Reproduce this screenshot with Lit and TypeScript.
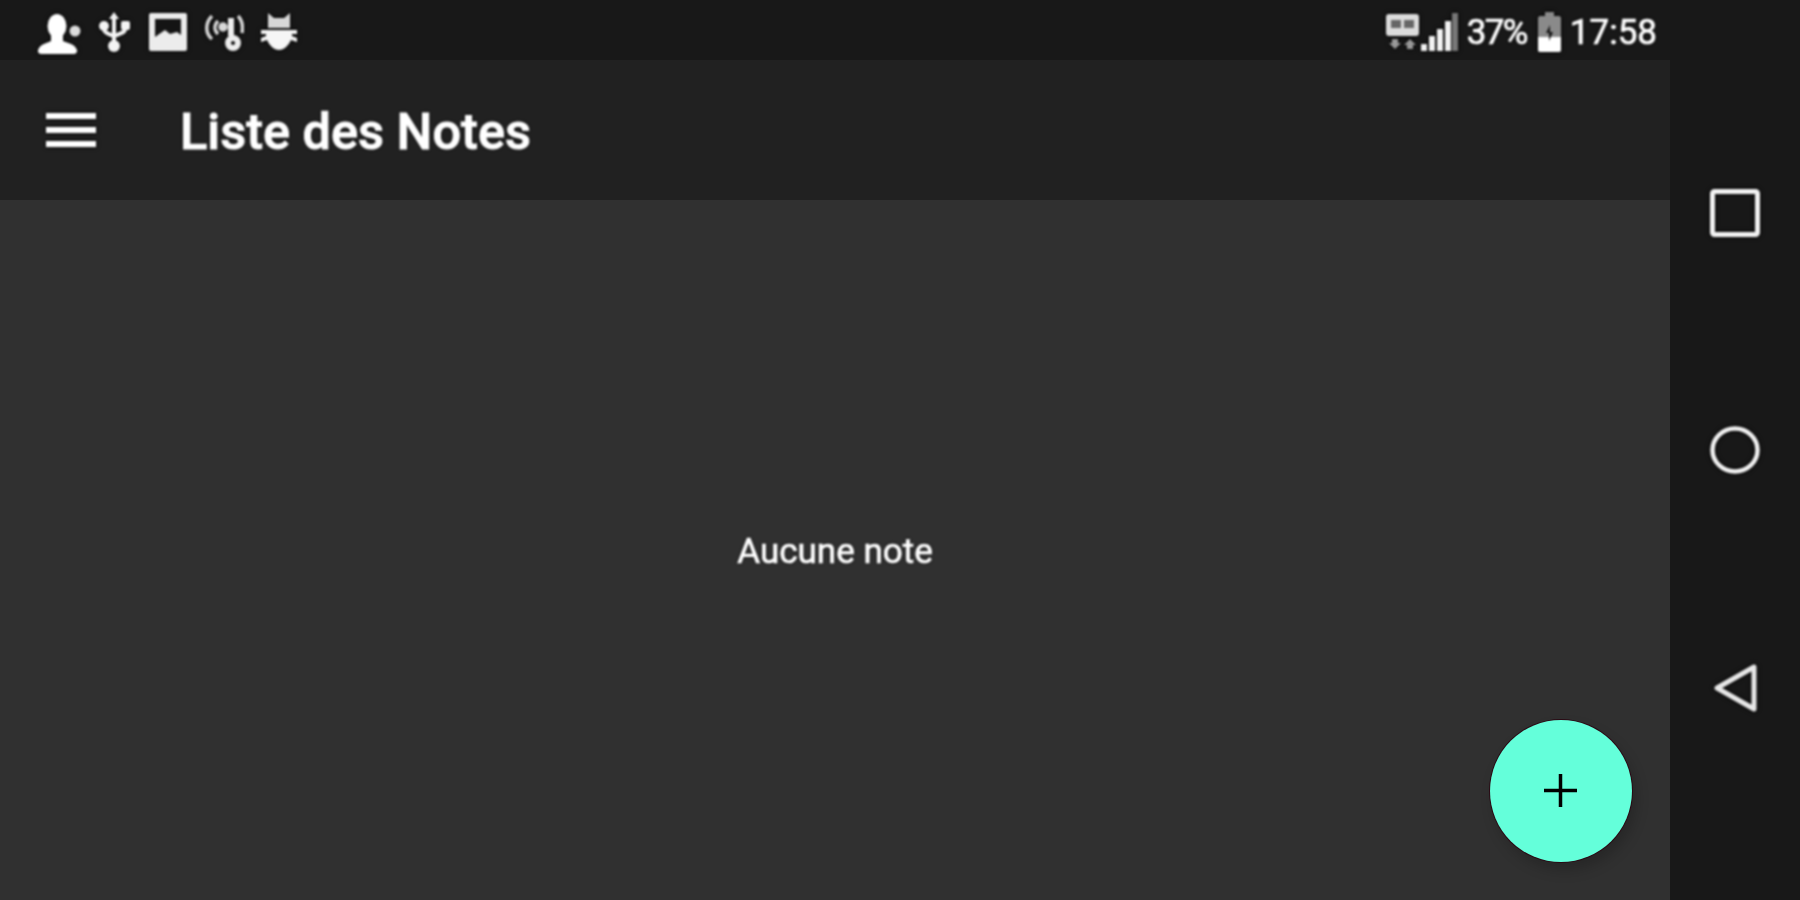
import { LitElement, html, css } from "lit";
import { customElement } from "lit/decorators.js";

@customElement("app-root")
export class AppRoot extends LitElement {
  static styles = css`
    :host {
      display: block;
      width: 1800px;
      height: 900px;
      font-family: Roboto, "Liberation Sans", sans-serif;
      color: #fff;
    }
    .device {
      display: flex;
      height: 900px;
      background: #181818;
    }
    .main {
      position: relative;
      display: flex;
      flex-direction: column;
      width: 1670px;
    }
    .status {
      display: flex;
      align-items: center;
      justify-content: space-between;
      height: 60px;
      padding: 3px 13px 0 38px;
      box-sizing: border-box;
      background: #181818;
    }
    .left,
    .right {
      display: flex;
      align-items: center;
    }
    .left {
      gap: 17px;
    }
    .ic {
      display: block;
      filter: drop-shadow(0 0 2px #000) blur(1px);
    }
    .person {
      margin-top: 4px;
    }
    .data {
      margin: 0 2px 0 0;
    }
    .signal {
      margin-right: 9px;
    }
    .battery {
      margin: 0 9px 0 11px;
    }
    .stat-text {
      padding-top: 2px;
      font-size: 35px;
      line-height: 40px;
      color: #fff;
      -webkit-text-stroke: 0.7px #fff;
      text-shadow: 0 0 3px #000;
      filter: blur(0.8px);
    }
    .pct {
      letter-spacing: -1.6px;
    }
    .toolbar {
      display: flex;
      align-items: center;
      gap: 84px;
      height: 140px;
      padding: 0 0 0 46px;
      box-sizing: border-box;
      background: #212121;
    }
    .title {
      padding-top: 3px;
      font-size: 50.5px;
      font-weight: 500;
      -webkit-text-stroke: 1px #fff;
      text-shadow: 0 0 3px #000;
      filter: blur(0.8px);
    }
    .content {
      flex: 1;
      display: flex;
      align-items: center;
      justify-content: center;
      background: #303030;
    }
    .empty {
      padding-top: 2px;
      font-size: 35px;
      color: #fff;
      -webkit-text-stroke: 0.7px #fff;
      text-shadow: 0 0 3px #000;
      filter: blur(0.8px);
    }
    .fab {
      position: absolute;
      right: 38px;
      bottom: 38px;
      display: flex;
      align-items: center;
      justify-content: center;
      width: 142px;
      height: 142px;
      border-radius: 50%;
      background: #64ffda;
      box-shadow: 0 0 0 1px #2a0a14, 4px 8px 14px rgba(0, 0, 0, 0.2);
    }
    .fab svg {
      margin: 0 2px 2px 0;
      filter: blur(0.5px);
    }
    .nav {
      display: flex;
      flex-direction: column;
      align-items: center;
      gap: 189px;
      width: 130px;
      padding-top: 189px;
      box-sizing: border-box;
    }
    .nav .ic {
      filter: drop-shadow(0 0 2px #000) blur(0.8px);
    }
  `;

  render() {
    return html`
      <div class="device">
        <div class="main">
          <div class="status">
            <div class="left">
              <svg class="ic person" width="44" height="40" viewBox="0 0 44 40" fill="#fff">
                <ellipse cx="19" cy="12" rx="9.500" ry="12" />
                <path d="M13 20h12v7c5 2 12 3 14 9 .6 2-1 4-3 4H3c-2 0-3.600-2-3-4 2-6 9-7 13-9z" />
                <circle cx="37" cy="17" r="5.500" fill="#ddd" />
              </svg>
              <svg class="ic" width="33" height="40" viewBox="0 0 33 40" fill="#f4f4f4">
                <path d="M15 0l5 7h-3v10h-4V7h-3z" />
                <circle cx="5" cy="14" r="5" />
                <rect x="22" y="9" width="9" height="9" rx="2" />
                <circle cx="15" cy="34" r="6" />
                <path d="M15 4v28M5 14v3c0 4 5 5 10 7 5-2 11-3 11-7v-3" fill="none" stroke="#f4f4f4" stroke-width="4" />
              </svg>
              <svg class="ic" width="38" height="38" viewBox="0 0 38 38">
                <rect width="38" height="38" rx="2" fill="#ececec" />
                <path d="M6 6h26v16l-4-3-7 2-5-4-10 7z" fill="#141414" />
              </svg>
              <svg class="ic" width="40" height="38" viewBox="0 0 40 38" fill="none" stroke="#d8d8d8" stroke-width="3.500">
                <path d="M8 3C1 10 1 20 8 26M14 8c-4 4-4 9 0 13" />
                <path d="M34 3c5 5 5 11 4 17" />
                <circle cx="19" cy="14" r="3" fill="#d8d8d8" />
                <path d="M27 5v18" stroke-width="6" stroke="#eee" />
                <circle cx="29" cy="30" r="5" stroke="#eee" stroke-width="6" />
              </svg>
              <svg class="ic" width="36" height="37" viewBox="0 0 36 37" fill="#f6f6f6">
                <path d="M7 0l6 5h10l6-5v15H7z" fill="#d8d8d8" />
                <path d="M0 17h36v4h-5v2l5 2v4l-6-2c-2 5-7 10-12 10S8 32 6 27l-6 2v-4l5-2v-2H0z" />
              </svg>
            </div>
            <div class="right">
              <svg class="ic data" width="33" height="35" viewBox="0 0 33 35">
                <rect width="33" height="22" rx="3" fill="#dcdcdc" />
                <rect x="5" y="6" width="10" height="8" fill="#666" />
                <rect x="18" y="6" width="10" height="8" fill="#666" />
                <path d="M6 25h6v4h3l-6 6-6-6h3zM21 35h6v-4h3l-6-6-6 6h3z" fill="#999" />
              </svg>
              <svg class="ic signal" width="37" height="38" viewBox="0 0 37 38" fill="#f2f2f2">
                <rect x="0" y="31" width="6" height="7" />
                <rect x="8" y="23" width="6" height="15" />
                <rect x="16" y="16" width="6" height="22" />
                <rect x="24" y="8" width="6" height="30" />
                <rect x="31" y="0" width="6" height="38" fill="#777" />
              </svg>
              <span class="stat-text pct">37%</span>
              <svg class="ic battery" width="23" height="40" viewBox="0 0 23 40">
                <path d="M7 0h9v4h5c1 0 2 1 2 2v32c0 1-1 2-2 2H2c-1 0-2-1-2-2V6c0-1 1-2 2-2h5z" fill="#8a8a8a" />
                <path d="M0 25h23v13c0 1-1 2-2 2H2c-1 0-2-1-2-2z" fill="#fff" />
                <path d="M12 13l-4 8h3v8l4-9h-3z" fill="#141414" />
              </svg>
              <span class="stat-text">17:58</span>
            </div>
          </div>
          <div class="toolbar">
            <svg class="ic" width="50" height="36" viewBox="0 0 50 36" fill="#fff">
              <rect y="1" width="50" height="6" />
              <rect y="15" width="50" height="6" />
              <rect y="29" width="50" height="6" />
            </svg>
            <span class="title">Liste des Notes</span>
          </div>
          <div class="content">
            <span class="empty">Aucune note</span>
          </div>
          <div class="fab">
            <svg width="33" height="33" viewBox="0 0 33 33" stroke="#000" stroke-width="3.500">
              <path d="M16.500 0v33M0 16.500h33" />
            </svg>
          </div>
        </div>
        <div class="nav">
          <svg class="ic" width="50" height="48" viewBox="0 0 50 48" fill="none" stroke="#f2f2f2" stroke-width="5">
            <rect x="2.500" y="2.500" width="45" height="43" rx="2" />
          </svg>
          <svg class="ic" width="50" height="48" viewBox="0 0 50 48" fill="none" stroke="#f2f2f2" stroke-width="4.500">
            <ellipse cx="25" cy="24" rx="22.500" ry="21.500" />
          </svg>
          <svg class="ic" width="46" height="50" viewBox="0 0 46 50" fill="none" stroke="#e8e8e8" stroke-width="5" stroke-linejoin="round">
            <path d="M42 4v42L5 25z" />
          </svg>
        </div>
      </div>
    `;
  }
}
